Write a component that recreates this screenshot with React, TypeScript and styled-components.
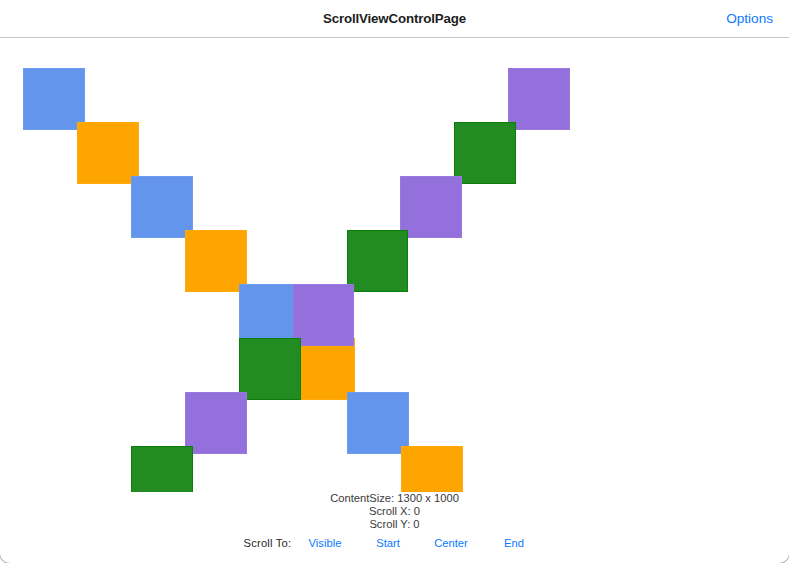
import React from "react";
import styled, { createGlobalStyle } from "styled-components";

const Global = createGlobalStyle`
  html, body { margin: 0; padding: 0; background: #fff; overflow: hidden; }
  body { font-family: "Liberation Sans", Arial, sans-serif; }
`;

const Page = styled.div`
  width: 789px;
  height: 563px;
  display: flex;
  flex-direction: column;
  background: #fff;
  border-bottom-left-radius: 10px;
  border-bottom-right-radius: 10px;
  box-shadow: 0 0 0 1px rgba(0, 0, 0, 0.28);
  overflow: hidden;
`;

const Header = styled.header`
  height: 37px;
  flex: none;
  border-bottom: 1px solid #c4c4c4;
  display: grid;
  grid-template-columns: 1fr auto 1fr;
  align-items: center;
  padding: 0 16px;
`;

const Title = styled.div`
  grid-column: 2;
  font-size: 13.3px;
  font-weight: 700;
  color: #1d1d1d;
  letter-spacing: -0.15px;
`;

const HeaderAction = styled.button`
  grid-column: 3;
  justify-self: end;
  border: 0;
  background: none;
  padding: 0;
  font: inherit;
  font-size: 13.6px;
  color: #0a7aff;
  cursor: pointer;
`;

const ScrollArea = styled.div`
  height: 454px;
  flex: none;
  overflow: hidden;
  position: relative;
`;

const Canvas = styled.div`
  position: relative;
  width: 1300px;
  height: 1000px;
`;

const Square = styled.div<{ $color: string; $border: string }>`
  position: absolute;
  width: 61.5px;
  height: 61.5px;
  box-sizing: border-box;
  background: ${(p) => p.$color};
  border: 1px solid ${(p) => p.$border};
`;

const Info = styled.div`
  display: flex;
  flex-direction: column;
  align-items: center;
  font-size: 11.2px;
  line-height: 13px;
  color: #3a3a3a;
`;

const ScrollRow = styled.div`
  margin-top: 2px;
  height: 20px;
  display: flex;
  justify-content: center;
  align-items: center;
  font-size: 11.2px;
`;

const RowLabel = styled.span`
  width: 50px;
  color: #262626;
  letter-spacing: 0.2px;
`;

const LinkButton = styled.button`
  width: 63px;
  border: 0;
  background: none;
  padding: 0;
  font: inherit;
  font-size: 11.2px;
  color: #0a7aff;
  text-align: center;
  cursor: pointer;
`;

const COLORS = {
  blue: { c: "#6495ed", b: "#6f9cef" },
  orange: { c: "#ffa500", b: "#ffab10" },
  purple: { c: "#9370db", b: "#9a79de" },
  green: { c: "#228b22", b: "#0b7f0b" },
};

type Key = keyof typeof COLORS;

const boxes: { x: number; y: number; k: Key }[] = [];
for (let i = 0; i < 8; i++) {
  boxes.push({ x: 23 + i * 54, y: 30 + i * 54, k: i % 2 === 0 ? "blue" : "orange" });
}
for (let i = 0; i < 8; i++) {
  boxes.push({ x: 508 - i * 53.8, y: 30 + i * 54, k: i % 2 === 0 ? "purple" : "green" });
}

export default function App() {
  return (
    <>
      <Global />
      <Page>
        <Header>
          <Title>ScrollViewControlPage</Title>
          <HeaderAction>Options</HeaderAction>
        </Header>
        <ScrollArea>
          <Canvas>
            {boxes.map((b, i) => (
              <Square
                key={i}
                $color={COLORS[b.k].c}
                $border={COLORS[b.k].b}
                style={{ left: b.x, top: b.y }}
              />
            ))}
          </Canvas>
        </ScrollArea>
        <Info>
          <div>ContentSize: 1300 x 1000</div>
          <div>Scroll X: 0</div>
          <div>Scroll Y: 0</div>
        </Info>
        <ScrollRow>
          <RowLabel>Scroll To:</RowLabel>
          <LinkButton>Visible</LinkButton>
          <LinkButton>Start</LinkButton>
          <LinkButton>Center</LinkButton>
          <LinkButton>End</LinkButton>
        </ScrollRow>
      </Page>
    </>
  );
}
